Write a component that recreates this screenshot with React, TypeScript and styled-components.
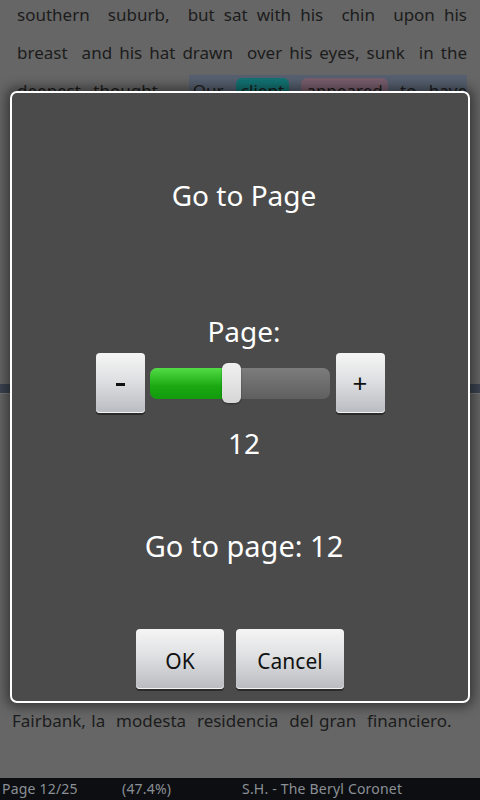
import styled, { createGlobalStyle } from 'styled-components';

const GlobalStyle = createGlobalStyle`
  html, body {
    margin: 0;
    padding: 0;
    background: #666666;
  }
  * {
    box-sizing: border-box;
  }
`;

const font = `"Noto Sans", "Open Sans", "DejaVu Sans", sans-serif`;

const topLines = [
  'southern  suburb,  but sat with his  chin  upon his',
  'breast  and his hat drawn  over his eyes, sunk  in the',
];

export default function App() {
  return (
    <Screen>
      <GlobalStyle />
      <Reader>
        <TextBlock>
          {topLines.map(line => <Line key={line}>{line}</Line>)}
          <Line>
            deepest thought.{' '}
            <Selection>
              Our <Mark $color="#137474">client</Mark> <Mark $color="#7a5f6e">appeared</Mark> to have
            </Selection>
          </Line>
        </TextBlock>
        <PageBreak />
        <BottomText>Fairbank, la  modesta  residencia  del gran  financiero.</BottomText>
      </Reader>
      <StatusBar>
        <StatusCell>Page 12/25</StatusCell>
        <StatusCell>(47.4%)</StatusCell>
        <StatusCell>S.H. - The Beryl Coronet</StatusCell>
      </StatusBar>
      <GoToPageDialog page={12} progress={46} />
    </Screen>
  );
}

interface GoToPageDialogProps {
  page : number,
  progress : number
}

const GoToPageDialog = (props : GoToPageDialogProps) => {
  const { page, progress } = props;
  return (
    <Dialog>
      <Title>Go to Page</Title>
      <Label>Page:</Label>
      <SliderRow>
        <StepButton><Minus /></StepButton>
        <Track>
          <Fill style={{ width: `${progress}%` }} />
          <Thumb />
        </Track>
        <StepButton>+</StepButton>
      </SliderRow>
      <PageValue>{page}</PageValue>
      <Summary>Go to page: {page}</Summary>
      <Actions>
        <ActionButton $width={88}>OK</ActionButton>
        <ActionButton $width={108}>Cancel</ActionButton>
      </Actions>
    </Dialog>
  );
};

const Screen = styled.div`
  position: relative;
  width: 480px;
  height: 800px;
  display: flex;
  flex-direction: column;
  overflow: hidden;
  font-family: ${font};
`;

const Reader = styled.div`
  flex: 1;
  display: flex;
  flex-direction: column;
  background: #666666;
  color: #1c1c1c;
`;

const TextBlock = styled.div`
  margin-top: -4px;
  padding: 0 13px 0 17px;
  font-size: 17px;
  line-height: 38px;
`;

const Line = styled.div`
  text-align: justify;
  text-align-last: justify;
  white-space: pre-wrap;
`;

const Selection = styled.span`
  background: #566070;
  margin-left: 14px;
  padding: 4px 0 10px 4px;
`;

const Mark = styled.span<{$color : string}>`
  background: ${p => p.$color};
  border-radius: 6px;
  padding: 1px 5px;
`;

const PageBreak = styled.div`
  margin-top: 274px;
  height: 10px;
  background: #3a4450;
  border-bottom: 1px solid #76797d;
`;

const BottomText = styled.div`
  margin-top: 312px;
  padding-left: 12px;
  font-size: 17px;
  line-height: 30px;
  white-space: pre;
  word-spacing: 1px;
`;

const StatusBar = styled.div`
  height: 22px;
  background: #0c0e11;
  color: #8b9096;
  font-size: 14px;
  line-height: 22px;
  display: flex;
  padding-left: 2px;
`;

const StatusCell = styled.div`
  flex: 0 0 120px;
  white-space: nowrap;
  letter-spacing: 0.2px;
`;

const Dialog = styled.div`
  position: absolute;
  left: 10px;
  top: 91px;
  width: 460px;
  height: 612px;
  background: #4b4b4b;
  border: 2px solid #ffffff;
  border-radius: 7px;
  box-shadow: 0 0 12px 4px rgba(0, 0, 0, 0.45);
  display: flex;
  flex-direction: column;
  align-items: center;
  color: #ffffff;
`;

const DialogText = styled.div`
  padding-left: 8px;
  line-height: 40px;
`;

const Title = styled(DialogText)`
  margin-top: 82px;
  font-size: 28px;
`;

const Label = styled(DialogText)`
  margin-top: 96px;
  font-size: 28px;
`;

const SliderRow = styled.div`
  margin-top: 2px;
  display: flex;
  align-items: center;
  gap: 5px;
`;

const buttonFace = `
  background: linear-gradient(#f5f5f5, #dfe0e2 45%, #b8bbc1);
  border-radius: 4px;
  box-shadow: 0 2px 0 #2b2b2b, inset 0 -1px 0 #f2f2f2;
  color: #111111;
  display: flex;
  align-items: center;
  justify-content: center;
  font-family: ${font};
`;

const StepButton = styled.div`
  ${buttonFace}
  width: 49px;
  height: 60px;
  font-size: 26px;
`;

const Minus = styled.span`
  width: 9px;
  height: 3px;
  background: #111111;
  margin-top: 2px;
`;

const Track = styled.div`
  position: relative;
  width: 180px;
  height: 31px;
  margin-right: 1px;
  border-radius: 7px;
  background: linear-gradient(#7c7c7c, #5f5f5f);
  display: flex;
  align-items: center;
`;

const Fill = styled.div`
  height: 100%;
  border-radius: 7px 0 0 7px;
  background: linear-gradient(#52dc45, #1aa812 60%, #129a0c);
`;

const Thumb = styled.div`
  width: 19px;
  height: 40px;
  margin-left: -10px;
  border-radius: 6px;
  background: linear-gradient(#f0f0f0, #d6d6d6);
  box-shadow: 0 1px 2px rgba(0, 0, 0, 0.4);
`;

const PageValue = styled(DialogText)`
  margin-top: 10px;
  font-size: 28px;
`;

const Summary = styled(DialogText)`
  margin-top: 63px;
  font-size: 29px;
`;

const Actions = styled.div`
  margin-top: 63px;
  display: flex;
  gap: 12px;
`;

const ActionButton = styled.div<{$width : number}>`
  ${buttonFace}
  width: ${p => p.$width}px;
  height: 60px;
  padding-top: 3px;
  font-size: 21px;
`;
